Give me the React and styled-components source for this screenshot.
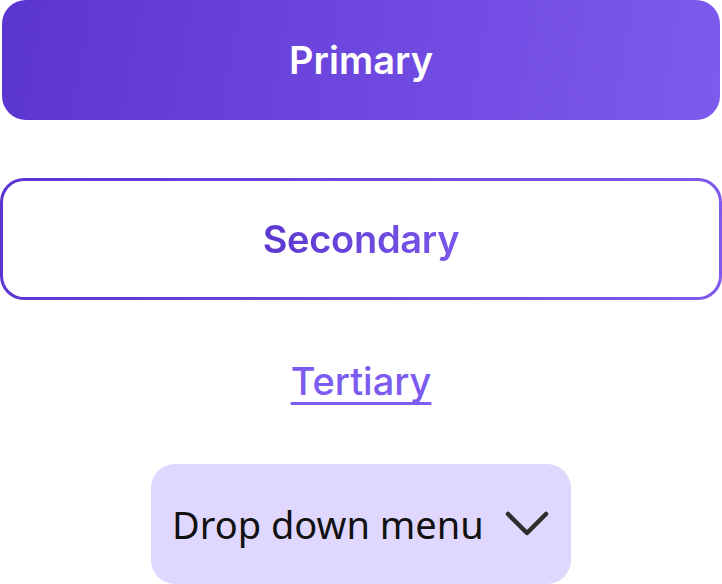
import React from "react";
import styled, { createGlobalStyle } from "styled-components";

const Global = createGlobalStyle`
  html, body { margin: 0; padding: 0; background: #ffffff; }
  body { font-family: Inter, "Noto Sans", sans-serif; }
`;

const Page = styled.div`
  width: 722px;
  height: 584px;
  overflow: hidden;
  display: flex;
  flex-direction: column;
  align-items: center;
`;

const PrimaryButton = styled.button`
  box-sizing: border-box;
  width: 718px;
  height: 120px;
  margin-left: 2px;
  align-self: flex-start;
  flex-shrink: 0;
  border: none;
  border-radius: 24px;
  background: linear-gradient(100deg, #5b35cf 0%, #7f5aee 100%);
  color: #ffffff;
  font-family: Inter, sans-serif;
  font-weight: 600;
  font-size: 38px;
  display: flex;
  align-items: center;
  justify-content: center;
  padding: 0;
`;

const SecondaryButton = styled.button`
  box-sizing: border-box;
  margin-top: 58px;
  width: 722px;
  height: 122px;
  flex-shrink: 0;
  border: 3px solid transparent;
  border-radius: 24px;
  background:
    linear-gradient(#ffffff, #ffffff) padding-box,
    linear-gradient(100deg, #5b35cf 0%, #8059ee 100%) border-box;
  display: flex;
  align-items: center;
  justify-content: center;
  padding: 0;
`;

const GradientText = styled.span`
  font-family: Inter, sans-serif;
  font-weight: 600;
  font-size: 38px;
  letter-spacing: -0.3px;
  background: linear-gradient(90deg, #5c37cf 0%, #7a57ea 100%);
  -webkit-background-clip: text;
  background-clip: text;
  color: transparent;
`;

const TertiaryLink = styled.a`
  margin-top: 58px;
  font-family: Inter, sans-serif;
  font-weight: 500;
  font-size: 38px;
  line-height: 46px;
  color: #7b5bf0;
  text-decoration: underline;
  text-decoration-thickness: 3px;
  text-underline-offset: 7px;
  text-decoration-skip-ink: none;
  cursor: pointer;
`;

const Dropdown = styled.button`
  box-sizing: border-box;
  margin-top: 60px;
  width: 420px;
  height: 120px;
  flex-shrink: 0;
  border: none;
  border-radius: 24px;
  background: #e0d7ff;
  display: flex;
  align-items: center;
  padding: 0 20px 0 21px;
  gap: 20px;
`;

const DropLabel = styled.span`
  font-family: "Noto Sans", sans-serif;
  font-weight: 400;
  font-size: 38px;
  color: #111111;
`;

const Chevron = () => (
  <svg width="46" height="30" viewBox="0 0 46 30" fill="none">
    <path d="M4 5 L23 24 L42 5" stroke="#2d2d2d" strokeWidth="4.5" strokeLinecap="round" strokeLinejoin="round" />
  </svg>
);

export default function App() {
  return (
    <>
      <Global />
      <Page>
        <PrimaryButton>Primary</PrimaryButton>
        <SecondaryButton>
          <GradientText>Secondary</GradientText>
        </SecondaryButton>
        <TertiaryLink>Tertiary</TertiaryLink>
        <Dropdown>
          <DropLabel>Drop down menu</DropLabel>
          <Chevron />
        </Dropdown>
      </Page>
    </>
  );
}
